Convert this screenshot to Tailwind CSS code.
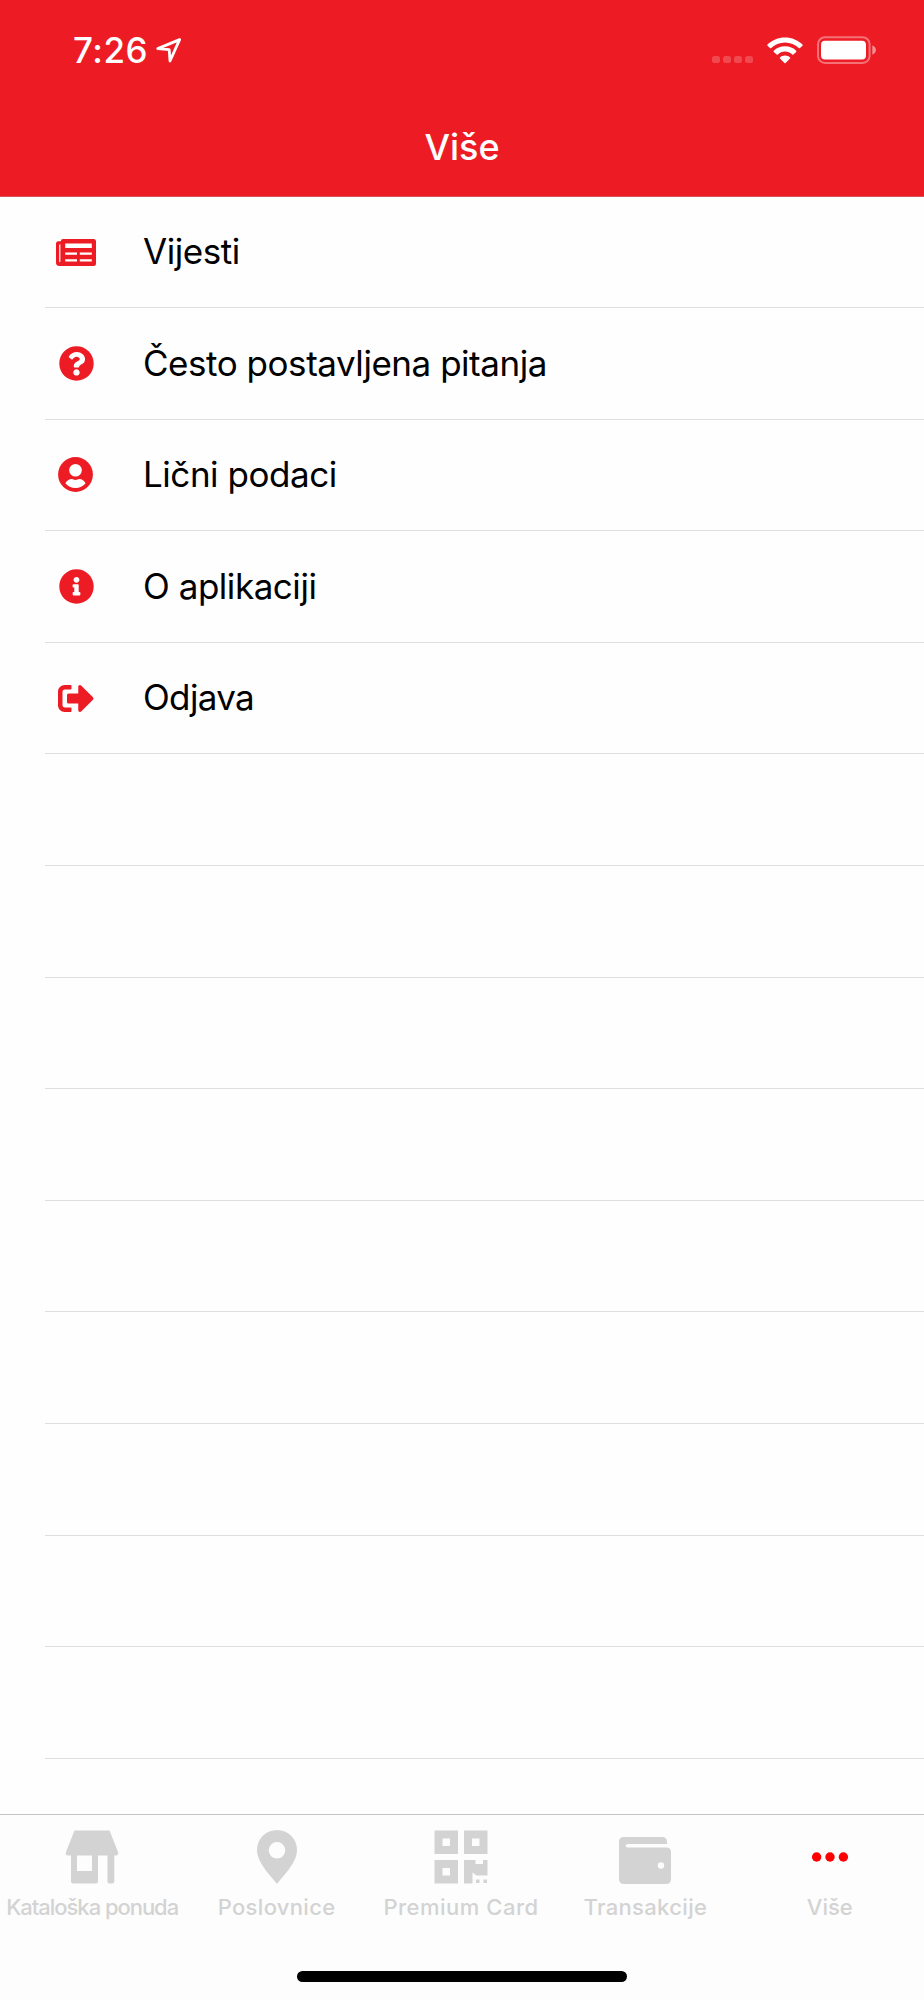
<!DOCTYPE html>
<html lang="bs">
<head>
<meta charset="utf-8">
<title>Više</title>
<script src="https://cdn.jsdelivr.net/npm/@tailwindcss/browser@4"></script>
</head>
<body class="bg-white">
<div class="flex h-[2000px] w-[924px] flex-col overflow-hidden bg-[#fefefe] font-['Inter',sans-serif] text-black">

  <header class="flex h-[197px] shrink-0 flex-col border-b border-[#d8535a] bg-[#ed1c24] text-white">
    <div class="flex h-[100px] items-center justify-between pr-[47px] pl-[73px]">
      <div class="flex items-center gap-[8px]">
        <span class="text-[35px] leading-[42px] font-medium tracking-[0.5px]">7:26</span>
        <svg class="h-[26px] w-[27px]" viewBox="0 0 27 26" fill="none" stroke="currentColor" stroke-width="2.8" stroke-linejoin="round"><path d="M23.600 2.600 1.800 11.600 13.200 12.600 14 24Z"/></svg>
      </div>
      <div class="flex items-center">
        <div class="mt-[19px] mr-[14px] flex gap-[3.4px]">
          <i class="size-[7.7px] rounded-[2.5px] bg-white/20"></i>
          <i class="size-[7.7px] rounded-[2.5px] bg-white/20"></i>
          <i class="size-[7.7px] rounded-[2.5px] bg-white/20"></i>
          <i class="size-[7.7px] rounded-[2.5px] bg-white/20"></i>
        </div>
        <svg class="mr-[14px] h-[27px] w-[36px]" viewBox="0 0 36 27" fill="currentColor">
          <path d="M18 .4C24.900.4 31.100 3.100 35.500 7.500Q36 8.100 35.500 8.700L33 11.100Q32.400 11.600 31.800 11.100C28.200 7.600 23.400 5.500 18 5.500S7.800 7.600 4.200 11.100Q3.600 11.600 3 11.100L.5 8.700Q0 8.100.5 7.500C4.900 3.100 11.100.4 18 .4Z"/>
          <path d="M18 9.300C22.500 9.300 26.500 11 29.200 13.700Q29.700 14.300 29.200 14.900L26.400 17.500Q25.800 18 25.200 17.500C23.300 15.700 20.800 14.600 18 14.600S12.700 15.700 10.800 17.500Q10.200 18 9.600 17.500L6.800 14.900Q6.300 14.300 6.800 13.700C9.500 11 13.500 9.300 18 9.300Z"/>
          <path d="M18 18.500C20 18.500 21.700 19.200 23 20.400Q23.500 21 23 21.500L18.600 26Q18 26.600 17.400 26L13 21.500Q12.500 21 13 20.400C14.300 19.200 16 18.500 18 18.500Z"/>
        </svg>
        <svg class="h-[28px] w-[60px]" viewBox="0 0 60 28" fill="none">
          <rect x="1" y="1.200" width="51.600" height="25.700" rx="7" stroke="#fff" stroke-opacity=".38" stroke-width="2"/>
          <rect x="4" y="4.700" width="45" height="18.900" rx="4" fill="#fff"/>
          <path d="M55.300 9.500Q58.900 10.800 58.900 14.100T55.300 18.700Z" fill="#fff" fill-opacity=".5"/>
        </svg>
      </div>
    </div>
    <h1 class="flex h-[93px] items-center justify-center text-[36px] font-medium">Više</h1>
  </header>

  <main class="h-[1617px] shrink-0 overflow-hidden pl-[45px]">
    <ul class="text-[35px] tracking-[-0.46px]">
      <li class="flex h-[111px] items-center border-b border-[#dedede]">
        <span class="flex w-[98px] pl-[11px]"><svg class="h-[27px] w-[40px]" viewBox="0 0 40 27">
          <path fill="#ed1c24" d="M7.200 0H37.500Q40 0 40 2.500V24.500Q40 27 37.500 27H3.500Q0 27 0 23.500V4.700Q0 2.200 2.500 2.200H4.700Q4.900 0 7.200 0Z"/>
          <path fill="#fff" d="M3.200 5.500H4.400V22.500Q4.400 23.300 3.800 23.300T3.200 22.500ZM9.200 4.500H35.800V9H9.200ZM9.200 13.400H21V15.700H9.200ZM23.800 13.400H35.800V15.700H23.800ZM9.200 20.300H21V22.600H9.200ZM23.800 20.300H35.800V22.600H23.800Z"/>
        </svg></span>
        <span class="pb-[1px]">Vijesti</span>
      </li>
      <li class="flex h-[111.6px] items-center border-b border-[#dedede]">
        <span class="flex w-[98px] pl-[13.5px]"><svg class="size-[35px]" viewBox="4 4 504 504" fill="#ed1c24"><path d="M504 256c0 136.997-111.043 248-248 248S8 392.997 8 256C8 119.083 119.043 8 256 8s248 111.083 248 248zM262.655 90c-54.497 0-89.255 22.957-116.549 63.758-3.536 5.286-2.353 12.415 2.715 16.258l34.699 26.310c5.205 3.947 12.621 3.008 16.665-2.122 17.864-22.658 30.113-35.797 57.303-35.797 20.429 0 45.698 13.148 45.698 32.958 0 14.976-12.363 22.667-32.534 33.976C247.128 238.528 216 254.941 216 296v4c0 6.627 5.373 12 12 12h56c6.627 0 12-5.373 12-12v-1.333c0-28.462 83.186-29.647 83.186-106.667 0-58.002-60.165-102-116.531-102zM256 338c-25.365 0-46 20.635-46 46 0 25.364 20.635 46 46 46s46-20.636 46-46c0-25.365-20.635-46-46-46z"/></svg></span>
        <span class="pb-[1px]">Često postavljena pitanja</span>
      </li>
      <li class="flex h-[111.6px] items-center border-b border-[#dedede]">
        <span class="flex w-[98px] pl-[13px]"><svg class="size-[35px]" viewBox="0 0 35 35">
          <circle cx="17.500" cy="17.500" r="17.400" fill="#ed1c24"/>
          <circle cx="17.500" cy="13.200" r="6.300" fill="#fff"/>
          <path fill="#fff" d="M7.400 26.300C8.600 23.700 11.200 22.100 13.600 22.100 15 22.100 15.800 22.900 17.500 22.900S20 22.100 21.400 22.100C23.800 22.100 26.400 23.700 27.600 26.300 25.300 29.300 21.600 31 17.500 31S9.700 29.300 7.400 26.300Z"/>
        </svg></span>
        <span class="pb-[1px]">Lični podaci</span>
      </li>
      <li class="flex h-[111.6px] items-center border-b border-[#dedede]">
        <span class="flex w-[98px] pl-[13.5px]"><svg class="size-[35px]" viewBox="4 4 504 504" fill="#ed1c24"><path d="M256 8C119.043 8 8 119.083 8 256c0 136.997 111.043 248 248 248s248-111.003 248-248C504 119.083 392.957 8 256 8zm0 110c23.196 0 42 18.804 42 42s-18.804 42-42 42-42-18.804-42-42 18.804-42 42-42zm56 254c0 6.627-5.373 12-12 12h-88c-6.627 0-12-5.373-12-12v-24c0-6.627 5.373-12 12-12h12v-64h-12c-6.627 0-12-5.373-12-12v-24c0-6.627 5.373-12 12-12h64c6.627 0 12 5.373 12 12v100h12c6.627 0 12 5.373 12 12v24z"/></svg></span>
        <span class="pb-[1px]">O aplikaciji</span>
      </li>
      <li class="flex h-[111.6px] items-center border-b border-[#dedede]">
        <span class="flex w-[98px] pl-[13px]"><svg class="h-[27px] w-[36px]" viewBox="0 0 512 384" fill="#ed1c24"><path d="M497 209L329 377c-15 15-41 4.500-41-17v-96H152c-13.300 0-24-10.700-24-24v-96c0-13.300 10.700-24 24-24h136V24c0-21.400 25.900-32 41-17l168 168c9.300 9.400 9.300 24.600 0 34zM192 372v-40c0-6.600-5.400-12-12-12H96c-17.700 0-32-14.300-32-32V96c0-17.700 14.300-32 32-32h84c6.600 0 12-5.400 12-12V12c0-6.600-5.400-12-12-12H96C43 0 0 43 0 96v192c0 53 43 96 96 96h84c6.600 0 12-5.400 12-12z"/></svg></span>
        <span class="pb-[1px] tracking-[-0.65px]">Odjava</span>
      </li>
      <li class="h-[111.6px] border-b border-[#dedede]"></li>
      <li class="h-[111.6px] border-b border-[#dedede]"></li>
      <li class="h-[111.6px] border-b border-[#dedede]"></li>
      <li class="h-[111.6px] border-b border-[#dedede]"></li>
      <li class="h-[111.6px] border-b border-[#dedede]"></li>
      <li class="h-[111.6px] border-b border-[#dedede]"></li>
      <li class="h-[111.6px] border-b border-[#dedede]"></li>
      <li class="h-[111.6px] border-b border-[#dedede]"></li>
      <li class="h-[111.6px] border-b border-[#dedede]"></li>
    </ul>
  </main>

  <footer class="flex h-[186px] shrink-0 flex-col items-center border-t border-[#c4c4c4] bg-[#fdfdfd]">
    <nav class="grid h-[156px] w-full grid-cols-5 pt-[15px] pr-[2px] text-[22px] leading-[26px] whitespace-nowrap text-[#d3d3d3]">
      <a class="flex flex-col items-center gap-[10px]">
        <svg class="size-[54px]" viewBox="0 0 54 54" fill="currentColor"><path d="M9.500.5H44.500L53 22Q54 25.500 50.500 25.500H3.500Q0 25.500 1 22ZM6 25H12V41H27V25H33V51.500Q33 53.500 31 53.500H8Q6 53.500 6 51.500ZM42.500 25H49.300V51.500Q49.300 53.500 47.300 53.500H44.500Q42.500 53.500 42.500 51.500Z"/></svg>
        <span class="font-medium tracking-[-1.04px]">Kataloška ponuda</span>
      </a>
      <a class="flex flex-col items-center gap-[10px]">
        <svg class="size-[54px]" viewBox="0 0 54 54" fill="currentColor"><path fill-rule="evenodd" d="M27 54C24 49 7 34 7 20A20 20 0 0 1 47 20C47 34 30 49 27 54ZM27 12A8.300 8.300 0 1 0 27 28.600 8.300 8.300 0 1 0 27 12Z"/></svg>
        <span class="font-medium tracking-[0.32px]">Poslovnice</span>
      </a>
      <a class="flex flex-col items-center gap-[10px]">
        <svg class="size-[54px]" viewBox="0 0 54 54" fill="currentColor"><path fill-rule="evenodd" d="M.5.500H24V24H.500ZM8.500 8.500V16H16V8.500ZM30 .5H53.500V24H30ZM38 8.500V16H45.500V8.500ZM.5 30H24V53.500H.500ZM8.500 38V45.500H16V38ZM30 30H41.500V34H49V30H53.500V45.500H42.500L38.500 42.500V53.500H30ZM42 49.500H45.500V53H42ZM49.500 49.500H53V53H49.500Z"/></svg>
        <span class="font-medium tracking-[0.5px]">Premium Card</span>
      </a>
      <a class="flex flex-col items-center gap-[10px]">
        <svg class="size-[54px]" viewBox="0 0 54 54" fill="currentColor"><path fill-rule="evenodd" d="M6 7H44Q49 7 49 12V14H10Q7.500 14 7.500 15.700T10 17.500H48.500Q53 17.500 53 22V49Q53 54 48 54H6Q1 54 1 49V12Q1 7 6 7ZM43 32.300A3.200 3.200 0 1 0 43 38.700 3.200 3.200 0 1 0 43 32.300Z"/></svg>
        <span class="font-medium tracking-[0.33px]">Transakcije</span>
      </a>
      <a class="flex flex-col items-center gap-[10px]">
        <svg class="size-[54px]" viewBox="0 0 54 54" fill="#ff0000"><circle cx="13.600" cy="27" r="4.700"/><circle cx="27" cy="27" r="4.700"/><circle cx="40.400" cy="27" r="4.700"/></svg>
        <span class="font-medium">Više</span>
      </a>
    </nav>
    <div class="h-[11px] w-[330px] rounded-full bg-black"></div>
  </footer>
</div>
</body>
</html>
